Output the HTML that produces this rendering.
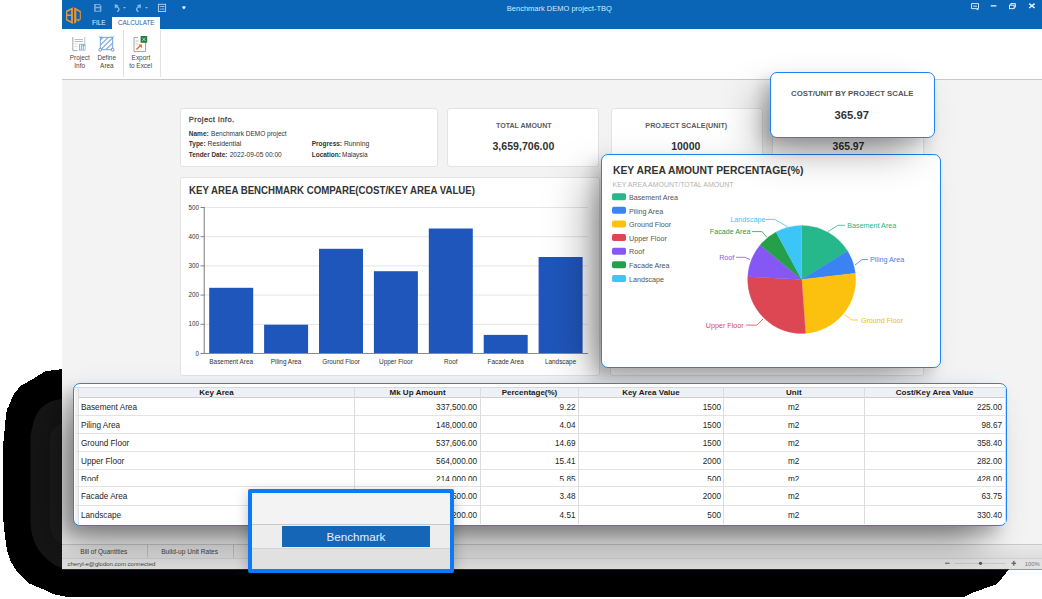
<!DOCTYPE html>
<html><head><meta charset="utf-8">
<style>
*{margin:0;padding:0;box-sizing:border-box}
html,body{width:1042px;height:599px;overflow:hidden;background:#fff;font-family:"Liberation Sans",sans-serif;position:relative}
.a{position:absolute}
.t{position:absolute;white-space:nowrap;line-height:1}
#win{left:62px;top:0;width:980px;height:569px;background:#f3f3f3;overflow:hidden}
#title{left:62px;top:0;width:980px;height:29px;background:#0b65b6}
#ribbon{left:62px;top:29px;width:980px;height:51px;background:#fff;border-bottom:1px solid #c9c9c9}
.card{position:absolute;background:#fff;border:1px solid #e3e3e3;border-radius:3px}
.callout{position:absolute;background:#fff;border:1.5px solid #1d84f6;border-radius:7px;box-shadow:-8px 8px 14px rgba(0,0,0,.16),-22px 14px 40px -10px rgba(0,0,0,.36)}
</style></head><body>
<svg class="a" style="left:0;top:0" width="1042" height="599" shape-rendering="crispEdges">
<path d="M62 369 L53 370.3 L45 371.3 L40 374.5 L34 378.3 L28 381.7 L20 386.3 L13.3 395 L9.3 405 L6.7 410 L5.3 422.3 L3.3 443.7 L3.3 520 L5.2 538 L7 550.7 L11 562 L17 571.5 L28 583 L45 590 L53 594 L66 596.8 L964 596.8 L971.8 593 L985.7 588 L995 585 L1000.5 580 L1004.4 575 L1009 569 L1009 369 Z" fill="#000"/>
</svg>
<svg class="a" style="left:0;top:0" width="1042" height="599">
<path d="M70 399 L62 399 C48 400 38 408 34 420 L30.5 435 L30.5 522 C31 540 38 552 48 560 C54 565 58 567 62 568 L70 568 Z" fill="#151515"/>
<path d="M70 423 L62 423 C56 425 51 430 50 437 L50 525 C51 535 56 541 62 544 L70 544 Z" fill="#1c1c1c"/>
</svg>
<div id="win" class="a"></div>
<div id="title" class="a"></div>
<svg class="a" style="left:62px;top:0" width="980" height="29">
 <!-- logo -->
 <g fill="#f3952f" transform="translate(0,4)">
  <path fill-rule="evenodd" d="M4 6.7 L10.9 3.2 L10.9 19.9 L4 16.2 Z M5.3 7.9 L9.1 6.1 L9.1 10.5 L5.3 10.5 Z M5.3 12 L9.1 12 L9.1 17.2 L5.3 15.3 Z"/>
  <path fill-rule="evenodd" d="M12.2 3.3 L18.8 7 L18.8 15.6 L17.2 16.4 L17.2 17.3 L16.2 17.8 L16.2 16.4 L14.3 16.4 L14.3 18.6 L12.2 19.8 Z M14.3 6.3 L17.8 8.3 L17.8 15.2 L14.3 15.2 Z"/>
 </g>
 <!-- save -->
 <path fill-rule="evenodd" fill="#7badde" d="M32.1 4.1 L37.8 4.1 L39.4 5.7 L39.4 11.7 L32.1 11.7 Z M33.8 5.1 L37.8 5.1 L37.8 6.8 L33.8 6.8 Z M33.8 8.3 L37.8 8.3 L37.8 10.7 L33.8 10.7 Z"/>
 <!-- undo -->
 <path d="M52.6 4.3 L53 8.4 L56.7 5.2 Z" fill="#8dbbe6"/>
 <path d="M54.4 6.6 C57.6 7.8 57.8 10 55.3 11.8" fill="none" stroke="#8dbbe6" stroke-width="1.3"/>
 <path d="M61 7.1 L64 7.1 L62.5 8.8 Z" fill="#8dbbe6"/>
 <!-- redo -->
 <path d="M79 4.3 L78.6 8.4 L74.9 5.2 Z" fill="#8dbbe6"/>
 <path d="M77.2 6.6 C74 7.8 73.8 10 76.3 11.8" fill="none" stroke="#8dbbe6" stroke-width="1.3"/>
 <path d="M83 7.1 L86 7.1 L84.5 8.8 Z" fill="#8dbbe6"/>
 <!-- list -->
 <g fill="none" stroke="#b8d4f0" stroke-width="0.9">
  <rect x="96.4" y="4.3" width="7.2" height="7.2"/>
 </g>
 <g fill="#b8d4f0"><rect x="97.8" y="6" width="1" height="1"/><rect x="99.4" y="6" width="3" height="0.9"/><rect x="97.8" y="8.6" width="1" height="1"/><rect x="99.4" y="8.6" width="3" height="0.9"/></g>
 <!-- qat dropdown -->
 <path d="M120.4 6.3 L123.4 6.3 L123.4 8 L121.9 9.2 L120.4 8 Z" fill="#e6effa"/>
 <!-- window controls -->
 <g fill="none" stroke="#d6e6f7" stroke-width="1">
  <path d="M909.5 3.6 L916.5 3.6 L916.5 8.6 L914.8 8.6 L916.2 10 L914 8.6 L909.5 8.6 Z"/>
  <line x1="911" y1="6.2" x2="915" y2="6.2"/>
 </g>
 <rect x="928.8" y="5.2" width="5.6" height="1.3" fill="#e6f0fa"/>
 <g fill="none" stroke="#e6f0fa" stroke-width="1">
  <rect x="947.5" y="5.2" width="4.6" height="3.4"/>
  <path d="M948.8 5.2 L948.8 3.6 L953.4 3.6 L953.4 7.2 L952.1 7.2"/>
 </g>
 <path d="M967.2 3.6 L972.6 8 M972.6 3.6 L967.2 8" stroke="#f0f6fc" stroke-width="1.4"/>
</svg>
<div class="a" style="left:112px;top:17px;width:48px;height:12px;background:#fff"></div>
<div id="ribbon" class="a"></div>
<div class="a" style="left:123px;top:30px;width:1px;height:47px;background:#e2e2e2"></div>
<div class="a" style="left:160px;top:30px;width:1px;height:47px;background:#e2e2e2"></div>
<svg class="a" style="left:62px;top:29px" width="120" height="50">
 <!-- project info -->
 <g transform="translate(0,0)">
  <path d="M10.8 8 L10.8 21.6 L15.5 21.6" fill="none" stroke="#9aa0a8" stroke-width="0.9"/>
  <line x1="22.8" y1="8" x2="22.8" y2="14.6" stroke="#b4b8bd" stroke-width="0.9"/>
  <line x1="12.6" y1="10.5" x2="21" y2="10.5" stroke="#9aa0a8" stroke-width="0.7"/>
  <line x1="12.6" y1="12.5" x2="21" y2="12.5" stroke="#9aa0a8" stroke-width="0.7"/>
  <line x1="12.6" y1="15" x2="15.5" y2="15" stroke="#c6c9cd" stroke-width="0.7"/>
  <line x1="12.6" y1="17.5" x2="15.5" y2="17.5" stroke="#c6c9cd" stroke-width="0.7"/>
  <rect x="17" y="14.8" width="6.5" height="6.8" fill="#8fb6de"/>
  <rect x="18" y="15.6" width="1" height="5" fill="#e8f0f8"/><rect x="20" y="16.6" width="1" height="4" fill="#e8f0f8"/><rect x="22" y="17.3" width="1" height="3.3" fill="#e8f0f8"/>
 </g>
 <!-- define area -->
 <g>
  <rect x="38.3" y="8.3" width="12.4" height="12.4" fill="#fff" stroke="#6c9bd5" stroke-width="0.9"/>
  <g stroke="#76a3d9" stroke-width="1.1"><line x1="38.3" y1="11.2" x2="41.2" y2="8.3"/><line x1="38.3" y1="16.2" x2="46.2" y2="8.3"/><line x1="38.8" y1="20.7" x2="50.7" y2="8.8"/><line x1="43.8" y1="20.7" x2="50.7" y2="13.8"/><line x1="48.8" y1="20.7" x2="50.7" y2="18.8"/></g>
  <circle cx="38.3" cy="20.7" r="1.4" fill="#fff" stroke="#5d90cf" stroke-width="0.9"/>
  <circle cx="50.7" cy="20.7" r="1.4" fill="#fff" stroke="#5d90cf" stroke-width="0.9"/>
  <path d="M37 7.4 L38.4 8.8 L39.6 7.6 M49.4 7.6 L50.6 8.8 L52 7.4" fill="none" stroke="#5d90cf" stroke-width="0.9"/>
 </g>
 <!-- export -->
 <g>
  <path d="M76 8.6 L72 8.6 L72 22.6 L83.6 22.6 L83.6 12.4" fill="none" stroke="#9ea3aa" stroke-width="1"/>
  <line x1="73.5" y1="12" x2="76.5" y2="12" stroke="#a8acb2" stroke-width="0.8"/>
  <line x1="73.5" y1="14.5" x2="76" y2="14.5" stroke="#c8cbcf" stroke-width="0.8"/>
  <line x1="73.5" y1="16" x2="76" y2="16" stroke="#c8cbcf" stroke-width="0.8"/>
  <rect x="78.6" y="7" width="6.6" height="6.8" rx="0.6" fill="#1f7a3e"/>
  <path d="M80.2 8.6 L83.6 12.2 M83.6 8.6 L80.2 12.2" stroke="#d9efe0" stroke-width="0.8"/>
  <path d="M74.3 20.6 L78.6 16.4" stroke="#e8731e" stroke-width="1.4"/>
  <path d="M76.2 15.4 L80 15.4 L80 19.2 Z" fill="#e8731e"/>
 </g>
</svg>


<div class="t" style="left:92.0px;top:19.80px;font-size:6.4px;color:#eaf2fb;font-weight:normal;">FILE</div>
<div class="t" style="left:117.9px;top:19.85px;font-size:6.3px;color:#2c63a8;font-weight:normal;">CALCULATE</div>
<div class="t" style="left:506.8px;top:5.25px;font-size:7.5px;color:#d7e7f8;font-weight:normal;">Benchmark DEMO project-TBQ</div>
<div class="t" style="left:69.8px;top:54.77px;font-size:6.45px;color:#474747;font-weight:normal;">Project</div>
<div class="t" style="left:74.3px;top:62.77px;font-size:6.45px;color:#474747;font-weight:normal;">Info</div>
<div class="t" style="left:97.4px;top:54.77px;font-size:6.45px;color:#474747;font-weight:normal;">Define</div>
<div class="t" style="left:100.1px;top:62.77px;font-size:6.45px;color:#474747;font-weight:normal;">Area</div>
<div class="t" style="left:131.6px;top:54.77px;font-size:6.45px;color:#474747;font-weight:normal;">Export</div>
<div class="t" style="left:129.2px;top:62.77px;font-size:6.45px;color:#474747;font-weight:normal;">to Excel</div>
<div class="card" style="left:179.8px;top:107.8px;width:257.8px;height:59.2px"></div>
<div class="card" style="left:447.3px;top:107.8px;width:152.2px;height:59.2px"></div>
<div class="card" style="left:610.6px;top:107.8px;width:152px;height:59.2px"></div>
<div class="card" style="left:772.4px;top:107.8px;width:152px;height:59.2px"></div>
<div class="card" style="left:179.8px;top:176.7px;width:419.8px;height:198.9px"></div>
<div class="card" style="left:609.8px;top:176.7px;width:314.6px;height:198.9px"></div>
<div class="t" style="left:188.8px;top:116.20px;font-size:7.6px;color:#505050;font-weight:normal;-webkit-text-stroke:0.3px #505050;letter-spacing:0.4px;">Project Info.</div>
<div class="t" style="left:188.8px;top:130.75px;font-size:6.5px;color:#333;font-weight:bold;">Name:</div>
<div class="t" style="left:211.1px;top:130.75px;font-size:6.5px;color:#333;font-weight:normal;">Benchmark DEMO project</div>
<div class="t" style="left:188.8px;top:140.75px;font-size:6.5px;color:#333;font-weight:bold;">Type:</div>
<div class="t" style="left:207.6px;top:140.60px;font-size:6.8px;color:#333;font-weight:normal;">Residential</div>
<div class="t" style="left:188.8px;top:151.80px;font-size:6.4px;color:#333;font-weight:bold;">Tender Date:</div>
<div class="t" style="left:229.7px;top:151.70px;font-size:6.6px;color:#333;font-weight:normal;">2022-09-05 00:00</div>
<div class="t" style="left:311.7px;top:140.75px;font-size:6.5px;color:#333;font-weight:bold;">Progress:</div>
<div class="t" style="left:343.9px;top:140.60px;font-size:6.8px;color:#333;font-weight:normal;">Running</div>
<div class="t" style="left:311.7px;top:151.75px;font-size:6.5px;color:#333;font-weight:bold;">Location:</div>
<div class="t" style="left:342.0px;top:151.75px;font-size:6.5px;color:#333;font-weight:normal;">Malaysia</div>
<div class="t" style="left:323.8px;width:400px;text-align:center;top:122.95px;font-size:7.1px;color:#5c5c5c;font-weight:bold;">TOTAL AMOUNT</div>
<div class="t" style="left:323.4px;width:400px;text-align:center;top:141.20px;font-size:10.6px;color:#333;font-weight:bold;">3,659,706.00</div>
<div class="t" style="left:486.3px;width:400px;text-align:center;top:122.40px;font-size:7.2px;color:#5c5c5c;font-weight:bold;">PROJECT SCALE(UNIT)</div>
<div class="t" style="left:485.8px;width:400px;text-align:center;top:141.25px;font-size:10.5px;color:#333;font-weight:bold;">10000</div>
<div class="t" style="left:648.5px;width:400px;text-align:center;top:141.80px;font-size:10.4px;color:#333;font-weight:bold;">365.97</div>
<svg class="a" style="left:0;top:0" width="1042" height="599">
<line x1="200.5" y1="353.5" x2="204.7" y2="353.5" stroke="#777" stroke-width="0.9"/>
<line x1="204.7" y1="324.3" x2="588" y2="324.3" stroke="#e2e2e2" stroke-width="0.9"/>
<line x1="200.5" y1="324.3" x2="204.7" y2="324.3" stroke="#777" stroke-width="0.9"/>
<line x1="204.7" y1="295.1" x2="588" y2="295.1" stroke="#e2e2e2" stroke-width="0.9"/>
<line x1="200.5" y1="295.1" x2="204.7" y2="295.1" stroke="#777" stroke-width="0.9"/>
<line x1="204.7" y1="265.9" x2="588" y2="265.9" stroke="#e2e2e2" stroke-width="0.9"/>
<line x1="200.5" y1="265.9" x2="204.7" y2="265.9" stroke="#777" stroke-width="0.9"/>
<line x1="204.7" y1="236.7" x2="588" y2="236.7" stroke="#e2e2e2" stroke-width="0.9"/>
<line x1="200.5" y1="236.7" x2="204.7" y2="236.7" stroke="#777" stroke-width="0.9"/>
<line x1="204.7" y1="207.5" x2="588" y2="207.5" stroke="#e2e2e2" stroke-width="0.9"/>
<line x1="200.5" y1="207.5" x2="204.7" y2="207.5" stroke="#777" stroke-width="0.9"/>
<rect x="209.2" y="287.8" width="44" height="65.7" fill="#1f56bb"/>
<rect x="264.1" y="324.7" width="44" height="28.8" fill="#1f56bb"/>
<rect x="319.0" y="248.8" width="44" height="104.7" fill="#1f56bb"/>
<rect x="373.9" y="271.2" width="44" height="82.3" fill="#1f56bb"/>
<rect x="428.8" y="228.5" width="44" height="125.0" fill="#1f56bb"/>
<rect x="483.7" y="334.9" width="44" height="18.6" fill="#1f56bb"/>
<rect x="538.6" y="257.0" width="44" height="96.5" fill="#1f56bb"/>
<line x1="204.2" y1="207" x2="204.2" y2="354" stroke="#7a7a7a" stroke-width="1"/>
<line x1="204.2" y1="353.5" x2="588" y2="353.5" stroke="#8a8a8a" stroke-width="1"/>
</svg>
<div class="t" style="left:189.0px;top:185.90px;font-size:10.2px;color:#333;font-weight:bold;transform:scaleX(0.948);transform-origin:0 0;">KEY AREA BENCHMARK COMPARE(COST/KEY AREA VALUE)</div>
<div class="t" style="left:-201.1px;width:400px;text-align:right;top:350.85px;font-size:6.3px;color:#333;font-weight:normal;">0</div>
<div class="t" style="left:-201.1px;width:400px;text-align:right;top:320.85px;font-size:6.3px;color:#333;font-weight:normal;">100</div>
<div class="t" style="left:-201.1px;width:400px;text-align:right;top:291.85px;font-size:6.3px;color:#333;font-weight:normal;">200</div>
<div class="t" style="left:-201.1px;width:400px;text-align:right;top:262.85px;font-size:6.3px;color:#333;font-weight:normal;">300</div>
<div class="t" style="left:-201.1px;width:400px;text-align:right;top:233.85px;font-size:6.3px;color:#333;font-weight:normal;">400</div>
<div class="t" style="left:-201.1px;width:400px;text-align:right;top:204.85px;font-size:6.3px;color:#333;font-weight:normal;">500</div>
<div class="t" style="left:31.2px;width:400px;text-align:center;top:358.80px;font-size:6.4px;color:#333;font-weight:normal;">Basement Area</div>
<div class="t" style="left:86.1px;width:400px;text-align:center;top:358.80px;font-size:6.4px;color:#333;font-weight:normal;">Piling Area</div>
<div class="t" style="left:141.0px;width:400px;text-align:center;top:358.80px;font-size:6.4px;color:#333;font-weight:normal;">Ground Floor</div>
<div class="t" style="left:195.9px;width:400px;text-align:center;top:358.80px;font-size:6.4px;color:#333;font-weight:normal;">Upper Floor</div>
<div class="t" style="left:250.8px;width:400px;text-align:center;top:358.80px;font-size:6.4px;color:#333;font-weight:normal;">Roof</div>
<div class="t" style="left:305.7px;width:400px;text-align:center;top:358.80px;font-size:6.4px;color:#333;font-weight:normal;">Facade Area</div>
<div class="t" style="left:360.6px;width:400px;text-align:center;top:358.80px;font-size:6.4px;color:#333;font-weight:normal;">Landscape</div>
<div class="callout" style="left:601px;top:154px;width:340px;height:214px"></div>
<svg class="a" style="left:0;top:0" width="1042" height="599">
<path d="M801.7 279.5 L801.70 225.50 A54 54 0 0 1 847.51 250.91 Z" fill="#26b88a" stroke="#26b88a" stroke-width="0.3"/>
<path d="M801.7 279.5 L847.51 250.91 A54 54 0 0 1 855.35 273.36 Z" fill="#3b82f3" stroke="#3b82f3" stroke-width="0.3"/>
<path d="M801.7 279.5 L855.35 273.36 A54 54 0 0 1 805.55 333.36 Z" fill="#fcc10f" stroke="#fcc10f" stroke-width="0.3"/>
<path d="M801.7 279.5 L805.55 333.36 A54 54 0 0 1 747.77 276.79 Z" fill="#dd4653" stroke="#dd4653" stroke-width="0.3"/>
<path d="M801.7 279.5 L747.77 276.79 A54 54 0 0 1 760.14 245.03 Z" fill="#8557f4" stroke="#8557f4" stroke-width="0.3"/>
<path d="M801.7 279.5 L760.14 245.03 A54 54 0 0 1 776.01 232.00 Z" fill="#24a04b" stroke="#24a04b" stroke-width="0.3"/>
<path d="M801.7 279.5 L776.01 232.00 A54 54 0 0 1 801.70 225.50 Z" fill="#3cc6f7" stroke="#3cc6f7" stroke-width="0.3"/>
<path d="M828 231.6 L838 225.3 L845 225.3" fill="none" stroke="#26b88a" stroke-width="0.8"/>
<path d="M855 265 L862 259.6 L868 259.6" fill="none" stroke="#3b82f3" stroke-width="0.8"/>
<path d="M844.5 314.6 L852 320 L858 320" fill="none" stroke="#fcc10f" stroke-width="0.8"/>
<path d="M763 319 L757 325.1 L746 325.1" fill="none" stroke="#dd4653" stroke-width="0.8"/>
<path d="M750 259.6 L745 257.3 L736 257.3" fill="none" stroke="#8557f4" stroke-width="0.8"/>
<path d="M766.6 237 L762 231.6 L752 231.6" fill="none" stroke="#24a04b" stroke-width="0.8"/>
<path d="M787.7 226.9 L774.8 219.4 L766 219.4" fill="none" stroke="#3cc6f7" stroke-width="0.8"/>
<rect x="612" y="193.20" width="14" height="7" rx="1.8" fill="#26b88a"/>
<rect x="612" y="206.83" width="14" height="7" rx="1.8" fill="#3b82f3"/>
<rect x="612" y="220.46" width="14" height="7" rx="1.8" fill="#fcc10f"/>
<rect x="612" y="234.09" width="14" height="7" rx="1.8" fill="#dd4653"/>
<rect x="612" y="247.72" width="14" height="7" rx="1.8" fill="#8557f4"/>
<rect x="612" y="261.35" width="14" height="7" rx="1.8" fill="#24a04b"/>
<rect x="612" y="274.98" width="14" height="7" rx="1.8" fill="#3cc6f7"/>
</svg>
<div class="t" style="left:612.5px;top:165.20px;font-size:10.6px;color:#333;font-weight:bold;transform:scaleX(0.976);transform-origin:0 0;">KEY AREA AMOUNT PERCENTAGE(%)</div>
<div class="t" style="left:612.5px;top:181.51px;font-size:6.97px;color:#b3b3b3;font-weight:normal;">KEY AREA AMOUNT/TOTAL AMOUNT</div>
<div class="t" style="left:629.0px;top:194.92px;font-size:7.16px;color:#555;font-weight:normal;">Basement Area</div>
<div class="t" style="left:629.0px;top:208.92px;font-size:7.16px;color:#555;font-weight:normal;">Piling Area</div>
<div class="t" style="left:629.0px;top:221.92px;font-size:7.16px;color:#555;font-weight:normal;">Ground Floor</div>
<div class="t" style="left:629.0px;top:235.92px;font-size:7.16px;color:#555;font-weight:normal;">Upper Floor</div>
<div class="t" style="left:629.0px;top:248.92px;font-size:7.16px;color:#555;font-weight:normal;">Roof</div>
<div class="t" style="left:629.0px;top:262.92px;font-size:7.16px;color:#555;font-weight:normal;">Facade Area</div>
<div class="t" style="left:629.0px;top:276.92px;font-size:7.16px;color:#555;font-weight:normal;">Landscape</div>
<div class="t" style="left:847.3px;top:222.92px;font-size:7.16px;color:#26b88a;font-weight:normal;">Basement Area</div>
<div class="t" style="left:870.0px;top:256.92px;font-size:7.16px;color:#3b82f3;font-weight:normal;">Piling Area</div>
<div class="t" style="left:860.9px;top:317.92px;font-size:7.16px;color:#f5b800;font-weight:normal;">Ground Floor</div>
<div class="t" style="left:705.8px;top:322.92px;font-size:7.16px;color:#dd4653;font-weight:normal;">Upper Floor</div>
<div class="t" style="left:719.2px;top:254.92px;font-size:7.16px;color:#8557f4;font-weight:normal;">Roof</div>
<div class="t" style="left:709.8px;top:228.92px;font-size:7.16px;color:#24a04b;font-weight:normal;">Facade Area</div>
<div class="t" style="left:730.4px;top:216.92px;font-size:7.16px;color:#3cc6f7;font-weight:normal;">Landscape</div>
<div class="callout" style="left:770px;top:72px;width:165px;height:66px;box-shadow:-8px 8px 14px rgba(0,0,0,.16),-16px 18px 40px -8px rgba(0,0,0,.42)"></div>
<div class="t" style="left:652.3px;width:400px;text-align:center;top:90.10px;font-size:7.8px;color:#555;font-weight:bold;">COST/UNIT BY PROJECT SCALE</div>
<div class="t" style="left:651.8px;width:400px;text-align:center;top:109.87px;font-size:11.26px;color:#333;font-weight:bold;">365.97</div>
<div class="a" style="left:62px;top:544px;width:980px;height:14px;background:linear-gradient(#e9e9e9,#dedede);border-top:1px solid #c9c9c9"></div>
<div class="a" style="left:147px;top:545px;width:1px;height:13px;background:#c4c4c4"></div>
<div class="a" style="left:233px;top:545px;width:1px;height:13px;background:#c4c4c4"></div>
<div class="a" style="left:62px;top:558px;width:980px;height:11px;background:#e2e2e2;border-top:1px solid #d0d0d0"></div>
<div class="a" style="left:62px;top:568.5px;width:980px;height:1px;background:rgba(20,80,150,.55)"></div>
<div class="t" style="left:-96.2px;width:400px;text-align:center;top:548.75px;font-size:6.5px;color:#444;font-weight:normal;">Bill of Quantities</div>
<div class="t" style="left:-10.4px;width:400px;text-align:center;top:548.70px;font-size:6.6px;color:#444;font-weight:normal;">Build-up Unit Rates</div>
<div class="t" style="left:67.5px;top:560.50px;font-size:6.0px;color:#454545;font-weight:normal;">cheryl-e@glodon.com connected</div>
<svg class="a" style="left:940px;top:558px" width="102" height="11">
 <rect x="5" y="4.6" width="4.6" height="1.3" fill="#777"/>
 <rect x="14" y="4.9" width="52" height="0.8" fill="#c2c2c2"/>
 <circle cx="40.5" cy="5.3" r="1.6" fill="#555"/>
 <rect x="71.5" y="4.6" width="4.6" height="1.3" fill="#666"/><rect x="73.15" y="2.8" width="1.3" height="5" fill="#666"/>
</svg>
<div class="t" style="left:1024.8px;top:561.60px;font-size:5.8px;color:#777;font-weight:normal;">100%</div>
<div class="callout" style="left:73px;top:383px;width:934px;height:143px;box-shadow:-8px 8px 14px rgba(0,0,0,.18),-18px 22px 40px -6px rgba(0,0,0,.42)"></div>
<div class="a" style="left:74.5px;top:386.5px;width:931px;height:11px;background:#edf0f5;border-top:1px solid #d9d9d9;border-bottom:1px solid #cfcfcf"></div>
<div class="a" style="left:74.5px;top:397px;width:4px;height:126px;background:#eef1f6"></div>
<div class="a" style="left:74.5px;top:414.7px;width:931px;height:1px;background:#e3e3e3"></div>
<div class="a" style="left:74.5px;top:432.9px;width:931px;height:1px;background:#e3e3e3"></div>
<div class="a" style="left:74.5px;top:450.7px;width:931px;height:1px;background:#e3e3e3"></div>
<div class="a" style="left:74.5px;top:468.8px;width:931px;height:1px;background:#e3e3e3"></div>
<div class="a" style="left:74.5px;top:486.0px;width:931px;height:1px;background:#e3e3e3"></div>
<div class="a" style="left:74.5px;top:504.8px;width:931px;height:1px;background:#e3e3e3"></div>
<div class="a" style="left:77.8px;top:387px;width:1px;height:137px;background:#dcdcdc"></div>
<div class="a" style="left:354.1px;top:387px;width:1px;height:137px;background:#dcdcdc"></div>
<div class="a" style="left:480.0px;top:387px;width:1px;height:137px;background:#dcdcdc"></div>
<div class="a" style="left:578.0px;top:387px;width:1px;height:137px;background:#dcdcdc"></div>
<div class="a" style="left:722.7px;top:387px;width:1px;height:137px;background:#dcdcdc"></div>
<div class="a" style="left:863.8px;top:387px;width:1px;height:137px;background:#dcdcdc"></div>
<div class="a" style="left:1004.5px;top:387px;width:1px;height:137px;background:#dcdcdc"></div>
<div class="t" style="left:16.5px;width:400px;text-align:center;top:389.00px;font-size:8.0px;color:#1a1a1a;font-weight:bold;">Key Area</div>
<div class="t" style="left:217.6px;width:400px;text-align:center;top:389.00px;font-size:8.0px;color:#1a1a1a;font-weight:bold;">Mk Up Amount</div>
<div class="t" style="left:329.5px;width:400px;text-align:center;top:389.00px;font-size:8.0px;color:#1a1a1a;font-weight:bold;">Percentage(%)</div>
<div class="t" style="left:450.9px;width:400px;text-align:center;top:389.00px;font-size:8.0px;color:#1a1a1a;font-weight:bold;">Key Area Value</div>
<div class="t" style="left:593.8px;width:400px;text-align:center;top:389.00px;font-size:8.0px;color:#1a1a1a;font-weight:bold;">Unit</div>
<div class="t" style="left:734.6px;width:400px;text-align:center;top:389.00px;font-size:8.0px;color:#1a1a1a;font-weight:bold;">Cost/Key Area Value</div>
<div class="t" style="left:81.0px;top:403.90px;font-size:8.2px;color:#1e1e1e;font-weight:normal;">Basement Area</div>
<div class="t" style="left:77.1px;width:400px;text-align:right;top:403.90px;font-size:8.2px;color:#1e1e1e;font-weight:normal;">337,500.00</div>
<div class="t" style="left:175.5px;width:400px;text-align:right;top:403.90px;font-size:8.2px;color:#1e1e1e;font-weight:normal;">9.22</div>
<div class="t" style="left:321.0px;width:400px;text-align:right;top:403.90px;font-size:8.2px;color:#1e1e1e;font-weight:normal;">1500</div>
<div class="t" style="left:593.6px;width:400px;text-align:center;top:403.90px;font-size:8.2px;color:#1e1e1e;font-weight:normal;">m2</div>
<div class="t" style="left:602.0px;width:400px;text-align:right;top:403.90px;font-size:8.2px;color:#1e1e1e;font-weight:normal;">225.00</div>
<div class="t" style="left:81.0px;top:421.90px;font-size:8.2px;color:#1e1e1e;font-weight:normal;">Piling Area</div>
<div class="t" style="left:77.1px;width:400px;text-align:right;top:421.90px;font-size:8.2px;color:#1e1e1e;font-weight:normal;">148,000.00</div>
<div class="t" style="left:175.5px;width:400px;text-align:right;top:421.90px;font-size:8.2px;color:#1e1e1e;font-weight:normal;">4.04</div>
<div class="t" style="left:321.0px;width:400px;text-align:right;top:421.90px;font-size:8.2px;color:#1e1e1e;font-weight:normal;">1500</div>
<div class="t" style="left:593.6px;width:400px;text-align:center;top:421.90px;font-size:8.2px;color:#1e1e1e;font-weight:normal;">m2</div>
<div class="t" style="left:602.0px;width:400px;text-align:right;top:421.90px;font-size:8.2px;color:#1e1e1e;font-weight:normal;">98.67</div>
<div class="t" style="left:81.0px;top:439.90px;font-size:8.2px;color:#1e1e1e;font-weight:normal;">Ground Floor</div>
<div class="t" style="left:77.1px;width:400px;text-align:right;top:439.90px;font-size:8.2px;color:#1e1e1e;font-weight:normal;">537,606.00</div>
<div class="t" style="left:175.5px;width:400px;text-align:right;top:439.90px;font-size:8.2px;color:#1e1e1e;font-weight:normal;">14.69</div>
<div class="t" style="left:321.0px;width:400px;text-align:right;top:439.90px;font-size:8.2px;color:#1e1e1e;font-weight:normal;">1500</div>
<div class="t" style="left:593.6px;width:400px;text-align:center;top:439.90px;font-size:8.2px;color:#1e1e1e;font-weight:normal;">m2</div>
<div class="t" style="left:602.0px;width:400px;text-align:right;top:439.90px;font-size:8.2px;color:#1e1e1e;font-weight:normal;">358.40</div>
<div class="t" style="left:81.0px;top:457.90px;font-size:8.2px;color:#1e1e1e;font-weight:normal;">Upper Floor</div>
<div class="t" style="left:77.1px;width:400px;text-align:right;top:457.90px;font-size:8.2px;color:#1e1e1e;font-weight:normal;">564,000.00</div>
<div class="t" style="left:175.5px;width:400px;text-align:right;top:457.90px;font-size:8.2px;color:#1e1e1e;font-weight:normal;">15.41</div>
<div class="t" style="left:321.0px;width:400px;text-align:right;top:457.90px;font-size:8.2px;color:#1e1e1e;font-weight:normal;">2000</div>
<div class="t" style="left:593.6px;width:400px;text-align:center;top:457.90px;font-size:8.2px;color:#1e1e1e;font-weight:normal;">m2</div>
<div class="t" style="left:602.0px;width:400px;text-align:right;top:457.90px;font-size:8.2px;color:#1e1e1e;font-weight:normal;">282.00</div>
<div class="a" style="left:0;top:469px;width:1042px;height:12px;overflow:hidden"><div class="a" style="left:0;top:-469px;width:1042px;height:599px"><div class="t" style="left:81.0px;top:475.90px;font-size:8.2px;color:#1e1e1e;font-weight:normal;">Roof</div><div class="t" style="left:77.1px;width:400px;text-align:right;top:475.90px;font-size:8.2px;color:#1e1e1e;font-weight:normal;">214,000.00</div><div class="t" style="left:175.5px;width:400px;text-align:right;top:475.90px;font-size:8.2px;color:#1e1e1e;font-weight:normal;">5.85</div><div class="t" style="left:321.0px;width:400px;text-align:right;top:475.90px;font-size:8.2px;color:#1e1e1e;font-weight:normal;">500</div><div class="t" style="left:593.6px;width:400px;text-align:center;top:475.90px;font-size:8.2px;color:#1e1e1e;font-weight:normal;">m2</div><div class="t" style="left:602.0px;width:400px;text-align:right;top:475.90px;font-size:8.2px;color:#1e1e1e;font-weight:normal;">428.00</div></div></div>
<div class="t" style="left:81.0px;top:492.90px;font-size:8.2px;color:#1e1e1e;font-weight:normal;">Facade Area</div>
<div class="t" style="left:77.1px;width:400px;text-align:right;top:492.90px;font-size:8.2px;color:#1e1e1e;font-weight:normal;">127,500.00</div>
<div class="t" style="left:175.5px;width:400px;text-align:right;top:492.90px;font-size:8.2px;color:#1e1e1e;font-weight:normal;">3.48</div>
<div class="t" style="left:321.0px;width:400px;text-align:right;top:492.90px;font-size:8.2px;color:#1e1e1e;font-weight:normal;">2000</div>
<div class="t" style="left:593.6px;width:400px;text-align:center;top:492.90px;font-size:8.2px;color:#1e1e1e;font-weight:normal;">m2</div>
<div class="t" style="left:602.0px;width:400px;text-align:right;top:492.90px;font-size:8.2px;color:#1e1e1e;font-weight:normal;">63.75</div>
<div class="t" style="left:81.0px;top:511.90px;font-size:8.2px;color:#1e1e1e;font-weight:normal;">Landscape</div>
<div class="t" style="left:77.1px;width:400px;text-align:right;top:511.90px;font-size:8.2px;color:#1e1e1e;font-weight:normal;">165,200.00</div>
<div class="t" style="left:175.5px;width:400px;text-align:right;top:511.90px;font-size:8.2px;color:#1e1e1e;font-weight:normal;">4.51</div>
<div class="t" style="left:321.0px;width:400px;text-align:right;top:511.90px;font-size:8.2px;color:#1e1e1e;font-weight:normal;">500</div>
<div class="t" style="left:593.6px;width:400px;text-align:center;top:511.90px;font-size:8.2px;color:#1e1e1e;font-weight:normal;">m2</div>
<div class="t" style="left:602.0px;width:400px;text-align:right;top:511.90px;font-size:8.2px;color:#1e1e1e;font-weight:normal;">330.40</div>
<div class="a" style="left:248px;top:489px;width:206px;height:84px;border:4.5px solid #0b7bf4;border-radius:2px;background:#f3f3f3;overflow:hidden;box-shadow:0 4px 14px rgba(0,0,0,.25)"><div class="a" style="left:0;top:30.5px;width:200px;height:24.5px;background:#ededed;border-top:1px solid #c9c9c9"></div><div class="a" style="left:0;top:55px;width:200px;height:30px;background:#e1e1e1;border-top:1px solid #d3d3d3"></div></div>
<div class="a" style="left:282.4px;top:525.9px;width:147.4px;height:21px;background:#1666b8"></div>
<div class="t" style="left:155.9px;width:400px;text-align:center;top:531.16px;font-size:11.67px;color:#e6effa;font-weight:normal;">Benchmark</div>
</body></html>
